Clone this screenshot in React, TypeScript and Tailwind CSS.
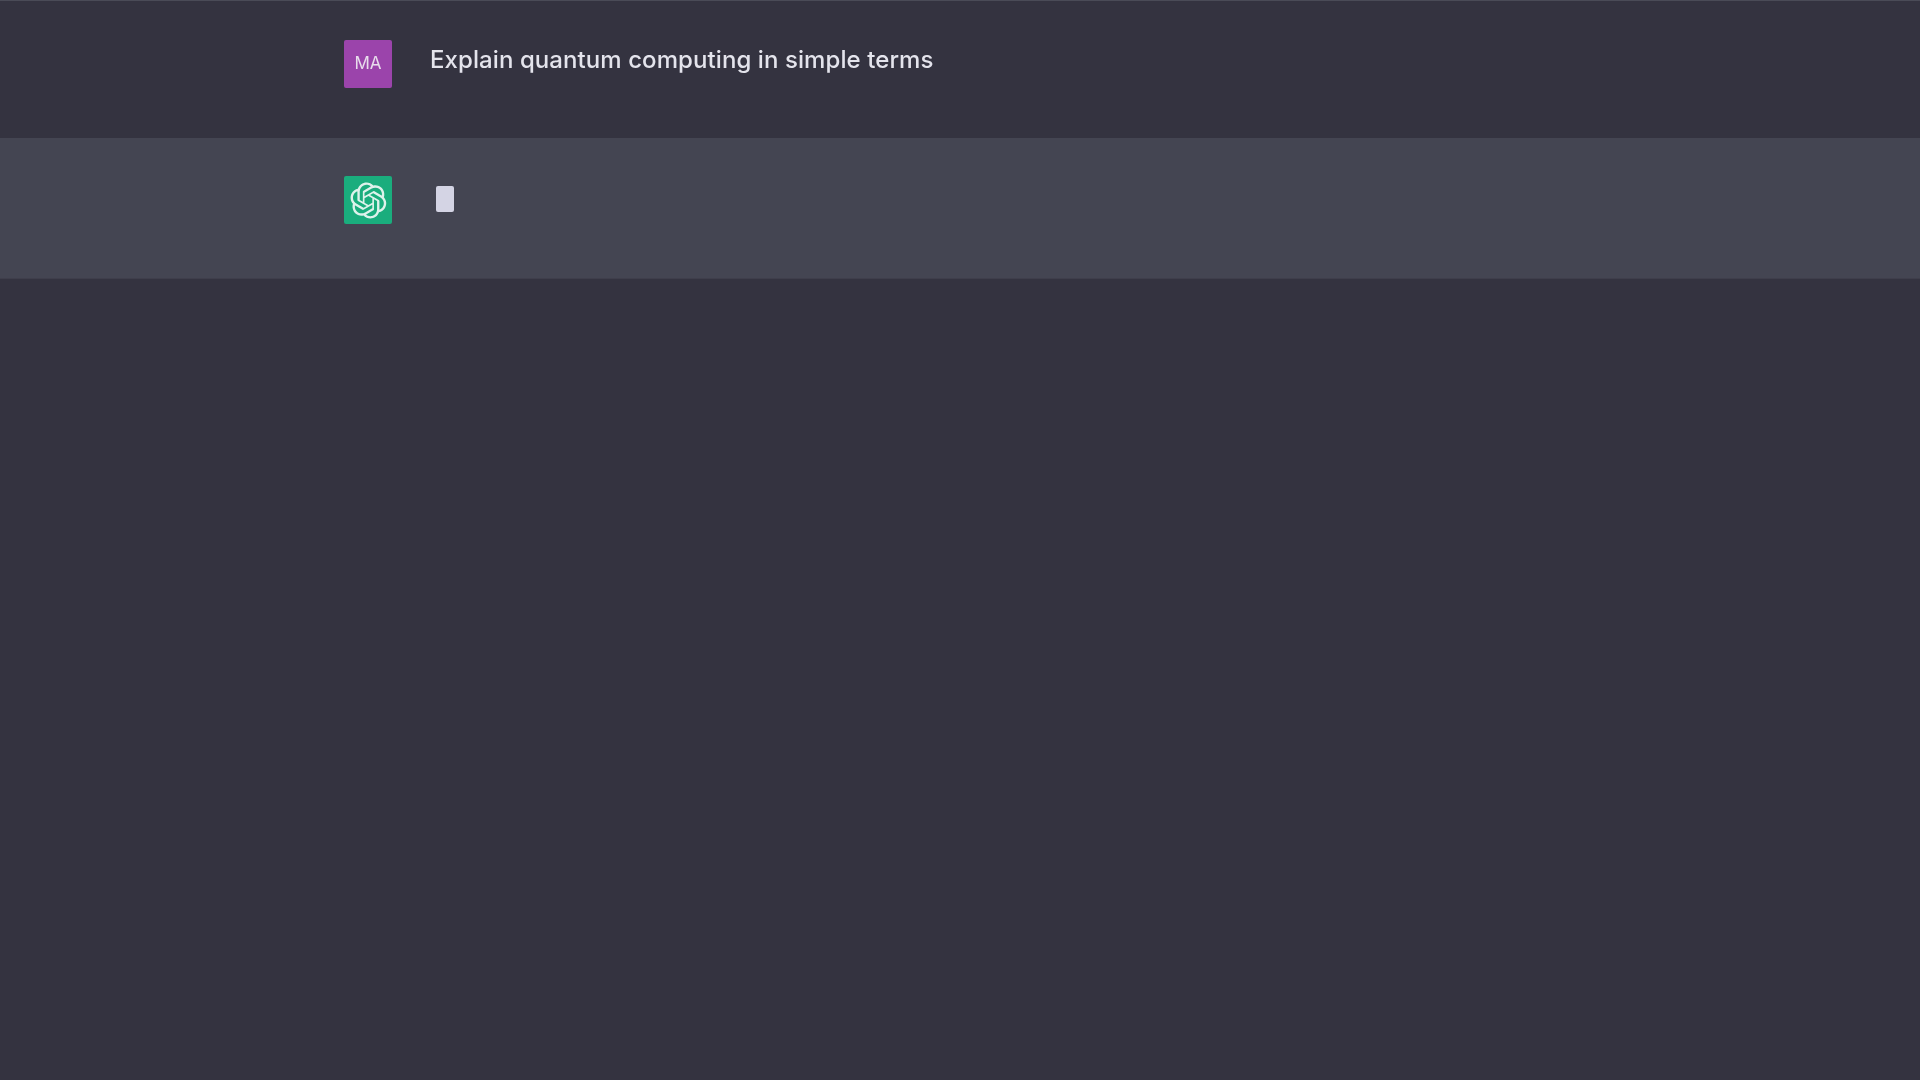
const logoPath =
  "M37.5324 16.8707C37.9808 15.5241 38.1363 14.0974 37.9886 12.6859C37.8409 11.2744 37.3934 9.91076 36.676 8.68622C35.6126 6.83404 33.9882 5.3676 32.0373 4.4985C30.0864 3.62941 27.9098 3.40259 25.8215 3.85078C24.8796 2.7893 23.7219 1.94125 22.4257 1.36341C21.1295 0.785575 19.7249 0.491269 18.3058 0.500197C16.1708 0.495044 14.0893 1.16803 12.3614 2.42214C10.6335 3.67624 9.34853 5.44666 8.6917 7.47815C7.30085 7.76286 5.98686 8.3414 4.8377 9.17505C3.68854 10.0087 2.73073 11.0782 2.02839 12.312C0.956464 14.1591 0.498905 16.2988 0.721698 18.4228C0.944492 20.5467 1.83612 22.5449 3.268 24.1293C2.81966 25.4759 2.66413 26.9026 2.81182 28.3141C2.95951 29.7256 3.40701 31.0892 4.12437 32.3138C5.18791 34.1659 6.8123 35.6322 8.76321 36.5013C10.7141 37.3704 12.8907 37.5973 14.9789 37.1492C15.9208 38.2107 17.0786 39.0587 18.3747 39.6366C19.6709 40.2144 21.0755 40.5087 22.4946 40.4998C24.6307 40.5054 26.7133 39.8321 28.4418 38.5772C30.1704 37.3223 31.4556 35.5506 32.1119 33.5179C33.5027 33.2332 34.8167 32.6547 35.9659 31.821C37.115 30.9874 38.0728 29.9178 38.7752 28.684C39.8458 26.8371 40.3023 24.6979 40.0789 22.5748C39.8556 20.4517 38.9639 18.4544 37.5324 16.8707ZM22.4978 37.8849C20.7443 37.8874 19.0459 37.2733 17.6994 36.1501C17.7601 36.117 17.8666 36.0586 17.936 36.0161L25.9004 31.4156C26.1003 31.3019 26.2663 31.137 26.3813 30.9378C26.4964 30.7386 26.5563 30.5124 26.5549 30.2825V19.0542L29.9213 20.998C29.9389 21.0068 29.9541 21.0198 29.9656 21.0359C29.977 21.052 29.9842 21.0707 29.9867 21.0902V30.3889C29.9842 32.375 29.1946 34.2791 27.7909 35.6841C26.3872 37.0892 24.4838 37.8806 22.4978 37.8849ZM6.39227 31.0064C5.51397 29.4888 5.19742 27.7107 5.49804 25.9832C5.55718 26.0187 5.66048 26.0818 5.73461 26.1244L13.699 30.7248C13.8975 30.8408 14.1233 30.902 14.3532 30.902C14.583 30.902 14.8088 30.8408 15.0073 30.7248L24.731 25.1103V28.9979C24.7321 29.0177 24.7283 29.0376 24.7199 29.0556C24.7115 29.0736 24.6988 29.0893 24.6829 29.1012L16.6317 33.7497C14.9096 34.7416 12.8643 35.0097 10.9447 34.4954C9.02506 33.9811 7.38785 32.7263 6.39227 31.0064ZM4.29707 13.6194C5.17156 12.0998 6.55279 10.9364 8.19885 10.3327C8.19885 10.4013 8.19491 10.5228 8.19491 10.6071V19.808C8.19351 20.0378 8.25334 20.2638 8.36823 20.4629C8.48312 20.6619 8.64893 20.8267 8.84863 20.9404L18.5723 26.5542L15.206 28.4979C15.1894 28.5089 15.1703 28.5155 15.1505 28.5173C15.1307 28.5191 15.1107 28.516 15.0924 28.5082L7.04046 23.8557C5.32135 22.8601 4.06716 21.2235 3.55289 19.3046C3.03862 17.3858 3.30624 15.3413 4.29707 13.6194ZM31.955 20.0556L22.2312 14.4411L25.5976 12.4981C25.6142 12.4872 25.6333 12.4805 25.6531 12.4787C25.6729 12.4769 25.6928 12.4801 25.7111 12.4879L33.7631 17.1364C34.9967 17.849 36.0017 18.8982 36.6606 20.1613C37.3194 21.4244 37.6047 22.849 37.4832 24.2684C37.3617 25.6878 36.8382 27.0432 35.9743 28.1759C35.1103 29.3086 33.9415 30.1717 32.6047 30.6641C32.6047 30.5947 32.6047 30.4733 32.6047 30.3889V21.188C32.6066 20.9586 32.5474 20.7328 32.4332 20.5338C32.319 20.3348 32.154 20.1698 31.955 20.0556ZM35.3055 15.0128C35.2464 14.9765 35.1431 14.9142 35.069 14.8717L27.1045 10.2712C26.906 10.1554 26.6803 10.0943 26.4504 10.0943C26.2206 10.0943 25.9948 10.1554 25.7963 10.2712L16.0726 15.8858V11.9982C16.0715 11.9783 16.0753 11.9585 16.0837 11.9405C16.0921 11.9225 16.1048 11.9068 16.1207 11.8949L24.1719 7.25025C25.4053 6.53903 26.8158 6.19376 28.2383 6.25482C29.6608 6.31589 31.0364 6.78077 32.2044 7.59508C33.3723 8.40939 34.2842 9.53945 34.8334 10.8531C35.3826 12.1667 35.5464 13.6095 35.3055 15.0128ZM14.2424 21.9419L10.8752 19.9981C10.8576 19.9893 10.8423 19.9763 10.8309 19.9602C10.8195 19.9441 10.8122 19.9254 10.8098 19.9058V10.6071C10.8107 9.18295 11.2173 7.78848 11.9819 6.58696C12.7466 5.38544 13.8377 4.42659 15.1275 3.82264C16.4173 3.21869 17.8524 2.99464 19.2649 3.1767C20.6775 3.35876 22.0089 3.93941 23.1034 4.85067C23.0427 4.88379 22.937 4.94215 22.8668 4.98473L14.9024 9.58517C14.7025 9.69878 14.5366 9.86356 14.4215 10.0626C14.3065 10.2616 14.2466 10.4877 14.2479 10.7175L14.2424 21.9419ZM16.071 17.9991L20.4018 15.4978L24.7325 17.9975V22.9985L20.4018 25.4983L16.071 22.9985V17.9991Z";

const App = () => {
  return (
    <div className="min-h-screen bg-[#343340] font-['Inter',sans-serif]">
      <div className="flex h-[138px] items-start gap-[38px] border-t border-[#4a4b57] pl-[344px] pt-[39px]">
        <div className="flex h-[48px] w-[48px] items-center justify-center rounded-[2px] bg-[#9b44ab] text-[17px] text-[#e8dcec] blur-[0.4px]">
          MA
        </div>
        <p className="-mt-[4px] text-[24px] font-medium leading-[48px] tracking-[0.08px] text-[#e4e4ec] blur-[0.5px]">
          Explain quantum computing in simple terms
        </p>
      </div>
      <div className="flex h-[141px] items-start gap-[44px] border-b border-[#3f3e4b] bg-[#444552] pl-[344px] pt-[38px]">
        <div className="flex h-[48px] w-[48px] items-center justify-center rounded-[2px] bg-[#1aad7d]">
          <svg viewBox="0 0 41 41" className="h-[37px] w-[37px] opacity-85 blur-[0.5px]" fill="#ffffff">
            <path d={logoPath} />
          </svg>
        </div>
        <div className="mt-[10px] h-[26px] w-[18px] rounded-[2px] bg-[#d4d4e4] blur-[0.5px]" />
      </div>
    </div>
  );
};

export default App;
